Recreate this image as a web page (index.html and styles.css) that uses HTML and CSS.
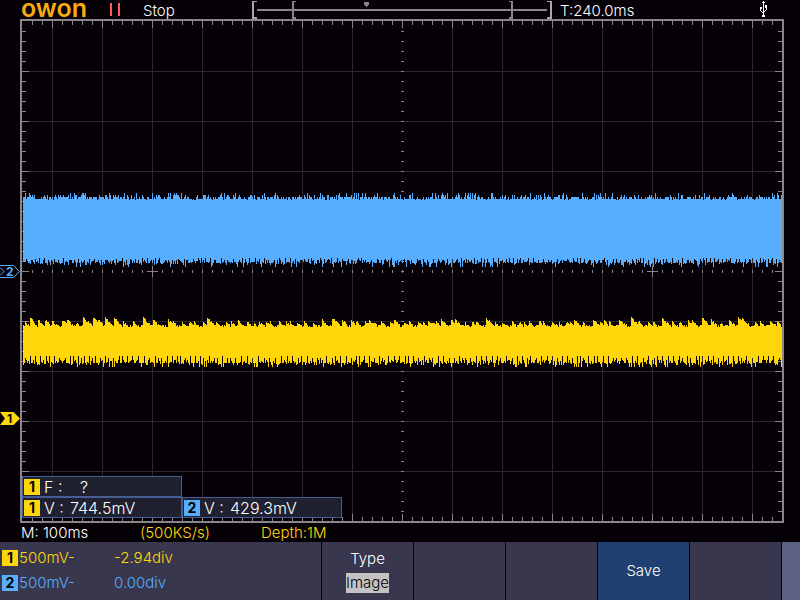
FILE: index.html
```html
<!DOCTYPE html>
<html lang="en">
<head>
<meta charset="utf-8">
<title>OWON oscilloscope</title>
<link rel="stylesheet" href="styles.css">
</head>
<body>
<div class="device">
  <header class="topbar">
    <span class="logo">owon</span>
    <span class="pause"></span>
    <span class="state">Stop</span>
    <svg class="navigator" viewBox="0 0 300 19" aria-hidden="true">
      <g fill="#8b8489">
        <path d="M5 9h290v2h-290z"/>
        <path d="M40 1h4v1h-2v15h2v2h-4z"/>
        <path d="M261 1h-4v1h2v15h-2v2h4z"/>
        <path d="M112 2h5v3h-1v1h-1v1h-1v-1h-1v-1h-1z"/>
      </g>
      <g fill="#a9a6a9">
        <path d="M0 1h5v1h-3v15h3v2h-5z"/>
        <path d="M300 1h-5v1h3v15h-3v2h5z"/>
      </g>
    </svg>
    <span class="trigger-time">T:240.0ms</span>
    <svg class="usb" viewBox="0 0 10 17" aria-hidden="true">
      <path fill="#fff" d="M4 0h1v1h1v1h-1v12h1v2h-3v-2h1v-12h-1v-1h1zM1 6h2v2h-2zM1 8h1v2h-1zM2 10h1v1h-1zM3 11h1v1h-1zM6 4h2v3h-2zM7 7h1v2h-1zM6 9h1v1h-1zM5 10h1v1h-1z"/>
    </svg>
  </header>

  <main class="scope">
    <div class="gutter">
      <svg class="marker marker-two" viewBox="0 0 20 13">
        <path d="M0 .5h13.500l6 6-6 6h-13.500M0 2.500l4 4-4 4" fill="none" stroke="#57aeff"/>
        <text x="6" y="11" fill="#57aeff">2</text>
      </svg>
      <svg class="marker marker-one" viewBox="0 0 20 13">
        <path d="M0 0h13.500l6.500 6.500-6.500 6.500h-13.500l5-6.500z" fill="#ffd60a"/>
        <text x="7" y="11" fill="#000">1</text>
      </svg>
    </div>
    <div class="screen">
      <svg class="plot" viewBox="20 19 764 504" preserveAspectRatio="none" aria-label="Waveforms">
        <path class="grid" id="grid"/>
        <path class="ticks" id="ticks"/>
        <path class="wave-two" id="wave-two"/>
        <path class="wave-one" id="wave-one"/>
        <path class="frame" d="M20 19h764v504h-764zM22 21v500h760v-500z"/>
      </svg>
      <div class="measures">
        <div class="measure measure-top"><span class="chip">1</span><span class="name">F :</span><span class="unknown">?</span></div>
        <div class="measure"><span class="chip">1</span><span class="name">V :</span><span>744.5mV</span></div>
        <div class="measure"><span class="chip chip-two">2</span><span class="name">V :</span><span>429.3mV</span></div>
      </div>
    </div>
  </main>

  <section class="timebase">
    <span>M: 100ms</span>
    <span class="accent">(500KS/s)</span>
    <span class="accent">Depth:1M</span>
  </section>

  <footer class="softkeys">
    <div class="channels">
      <div class="channel"><span class="chip">1</span><span class="scale">500mV-</span><span>-2.94div</span></div>
      <div class="channel channel-two"><span class="chip chip-two">2</span><span class="scale">500mV-</span><span>0.00div</span></div>
    </div>
    <button class="key" type="button"><span>Type</span><span class="value">Image</span></button>
    <button class="key" type="button" aria-label="Empty"></button>
    <button class="key" type="button" aria-label="Empty"></button>
    <button class="key key-save" type="button">Save</button>
    <button class="key" type="button" aria-label="Empty"></button>
    <div class="edge"></div>
  </footer>
</div>
<script src="scope.js"></script>
</body>
</html>
```
FILE: styles.css
```css
* { box-sizing: border-box; }

body {
  margin: 0;
  background: #060106;
  color: #fff;
  font: 300 15px/20px Inter, "Noto Sans", sans-serif;
}

.device {
  display: flex;
  flex-direction: column;
  min-height: 100vh;
}

.topbar {
  display: grid;
  grid-template-columns: 89px 33px 109px 300px 1fr 10px;
  grid-template-rows: 19px;
  align-items: center;
  height: 19px;
  padding: 0 31px 0 21px;
}

.logo {
  color: #fbab12;
  font-size: 25px;
  font-weight: 600;
  line-height: 10px;
  height: 14px;
}

.pause {
  width: 10px;
  height: 13px;
  border: solid #ff5a5a;
  border-width: 0 2px;
}

.state, .trigger-time { padding-top: 2px; }
.navigator { display: block; width: 300px; height: 19px; }
.trigger-time { padding-left: 8px; }
.usb { display: block; width: 10px; height: 17px; }

.scope {
  display: flex;
  flex: 1;
  padding-right: 16px;
}

.gutter { position: relative; width: 20px; }

.marker {
  position: absolute;
  left: 0;
  width: 20px;
  height: 13px;
}

.marker text { font: 700 12px Inter, sans-serif; }
.marker-two { top: calc(50% - 6px); }
.marker-one { top: 78%; }

.screen {
  position: relative;
  flex: 1;
  min-height: 300px;
}

.plot {
  position: absolute;
  inset: 0;
  width: 100%;
  height: 100%;
  shape-rendering: crispEdges;
}

.grid { fill: #2a2a2a; }
.ticks { fill: #8b8489; }
.frame { fill: #8b8489; fill-rule: evenodd; }
.wave-one { fill: #ffd60a; }
.wave-two { fill: #57aeff; }

.measures {
  position: absolute;
  left: 2px;
  bottom: 5px;
  display: grid;
  grid-template-columns: 160px 160px;
  font-size: 16px;
}

.measure {
  display: flex;
  align-items: center;
  height: 21px;
  padding-left: 1px;
  background: #1f2030;
  border: 1px solid #465d94;
}

.measure-top { grid-column: 1 / -1; width: 160px; }
.name { width: 26px; margin-left: 4px; white-space: nowrap; }
.unknown { margin-left: 10px; }

.chip {
  flex: none;
  width: 16px;
  height: 16px;
  background: #ffd60a;
  color: #000;
  font-size: 14px;
  font-weight: 700;
  line-height: 16px;
  text-align: center;
}

.chip-two { background: #57aeff; }

.timebase {
  display: grid;
  grid-template-columns: 119px 121px 1fr;
  height: 19px;
  padding-left: 21px;
}

.accent { color: #ffd60a; }

.softkeys {
  display: grid;
  grid-template-columns: 321fr repeat(5, 92fr) 19fr;
  height: 58px;
  background: #38374e;
}

.channels {
  display: flex;
  flex-direction: column;
  gap: 5px;
  padding: 6px 0 0 2px;
}

.channel { display: flex; align-items: center; height: 20px; color: #ffd60a; }
.channel-two { color: #57aeff; }
.scale { width: 96px; padding-left: 1px; }

.key {
  display: flex;
  flex-direction: column;
  align-items: center;
  justify-content: center;
  gap: 4px;
  padding: 0;
  border: 0;
  border-left: 1px solid #060106;
  background: none;
  color: inherit;
  font: inherit;
}

.key-save { background: #1f4070; }
.value { background: #c4c2c4; color: #000; }
.edge { background: #5b6282; border-left: 1px solid #060106; }
```
FILE: scope.js
```js
const rect = (x, y, w, h) => `M${x} ${y}h${w}v${h}h${-w}z`;

let grid = "";
let ticks = "";

for (let x = 32; x < 782; x += 10) {
  const major = (x - 2) % 50 === 0;
  const len = major ? 7 : 4;
  if (major && x !== 402) grid += rect(x, 21, 1, 500);
  ticks += rect(x, 21, 1, len) + rect(x, 521 - len, 1, len) + rect(x, 270, 1, 3);
}

for (let y = 31; y < 521; y += 10) {
  const major = (y - 21) % 50 === 0;
  const len = major ? 7 : 4;
  if (major && y !== 271) grid += rect(22, y, 760, 1);
  ticks += rect(22, y, len, 1) + rect(782 - len, y, len, 1) + rect(401, y, 3, 1);
}

for (const x of [152, 652]) {
  ticks += rect(x - 5, 271, 11, 1) + rect(x, 266, 1, 11);
}

document.getElementById("grid").setAttribute("d", grid);
document.getElementById("ticks").setAttribute("d", ticks);

// Seeded generator keeps the captured noise the same on every load.
let seed = 20240;
const rand = () => {
  seed = (seed * 1664525 + 1013904223) % 4294967296;
  return seed / 4294967296;
};
const pick = list => list[Math.floor(rand() * list.length)];

// One min/max bar per screen column; both traces carry a short ripple.
let two = "";
let one = "";
let bump = 0;
let wait = 3;
let notch = 3;
let dip = 4;
for (let x = 23; x < 782; x++) {
  const top2 = pick([197, 197, 197, 199, 199, 199, 199, 199, 197, 197, 195, 195, 193, 200]);
  dip -= 1;
  const bottom2 = dip === 0 ? pick([258, 259, 260]) : pick([260, 261, 262, 262, 263, 263, 263, 264, 265, 267]);
  if (dip === 0) dip = pick([3, 4, 5, 6]);
  two += rect(x, top2, 1, bottom2 - top2);

  wait -= 1;
  bump = wait === 0 ? pick([3, 4, 4, 5, 6, 8]) : Math.max(0, bump - 1);
  if (wait === 0) wait = pick([4, 5, 7, 9, 10]);
  const top1 = pick([325, 325, 326, 326, 327]) - bump;
  notch -= 1;
  const bottom1 = notch === 0 ? pick([356, 356, 358]) : pick([360, 361, 362, 363, 363, 363, 364, 365, 367]);
  if (notch === 0) notch = pick([3, 5, 5, 6]);
  one += rect(x, top1, 1, bottom1 - top1);
}
document.getElementById("wave-two").setAttribute("d", two);
document.getElementById("wave-one").setAttribute("d", one);
```
